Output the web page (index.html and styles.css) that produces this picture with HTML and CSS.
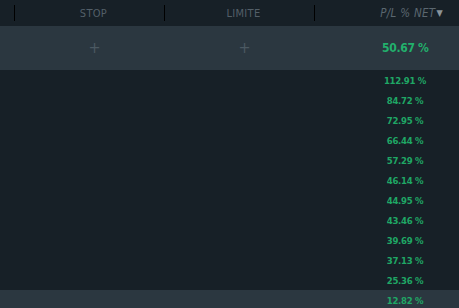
FILE: index.html
```html
<!DOCTYPE html>
<html>
<head>
<meta charset="utf-8">
<link rel="stylesheet" href="styles.css">
</head>
<body>
<div class="table">
  <div class="head">
    <div class="hcell c1"></div>
    <div class="hcell c2">STOP</div>
    <div class="hcell c3">LIMITE</div>
    <div class="hcell c4"><span class="pl">P/L % NET</span><span class="arrow">▼</span></div>
  </div>
  <div class="row active">
    <div class="cell c1"></div>
    <div class="cell c2"><span class="plus">+</span></div>
    <div class="cell c3"><span class="plus">+</span></div>
    <div class="cell c4 big">50.67 %</div>
  </div>
  <div class="list">
    <div class="row"><div class="cell c1"></div><div class="cell c2"></div><div class="cell c3"></div><div class="cell c4 num">112.91 %</div></div>
    <div class="row"><div class="cell c1"></div><div class="cell c2"></div><div class="cell c3"></div><div class="cell c4 num">84.72 %</div></div>
    <div class="row"><div class="cell c1"></div><div class="cell c2"></div><div class="cell c3"></div><div class="cell c4 num">72.95 %</div></div>
    <div class="row"><div class="cell c1"></div><div class="cell c2"></div><div class="cell c3"></div><div class="cell c4 num">66.44 %</div></div>
    <div class="row"><div class="cell c1"></div><div class="cell c2"></div><div class="cell c3"></div><div class="cell c4 num">57.29 %</div></div>
    <div class="row"><div class="cell c1"></div><div class="cell c2"></div><div class="cell c3"></div><div class="cell c4 num">46.14 %</div></div>
    <div class="row"><div class="cell c1"></div><div class="cell c2"></div><div class="cell c3"></div><div class="cell c4 num">44.95 %</div></div>
    <div class="row"><div class="cell c1"></div><div class="cell c2"></div><div class="cell c3"></div><div class="cell c4 num">43.46 %</div></div>
    <div class="row"><div class="cell c1"></div><div class="cell c2"></div><div class="cell c3"></div><div class="cell c4 num">39.69 %</div></div>
    <div class="row"><div class="cell c1"></div><div class="cell c2"></div><div class="cell c3"></div><div class="cell c4 num">37.13 %</div></div>
    <div class="row"><div class="cell c1"></div><div class="cell c2"></div><div class="cell c3"></div><div class="cell c4 num">25.36 %</div></div>
    <div class="row hl"><div class="cell c1"></div><div class="cell c2"></div><div class="cell c3"></div><div class="cell c4 num">12.82 %</div></div>
  </div>
</div>
</body>
</html>
```

FILE: styles.css
```css
html, body {
  margin: 0;
  padding: 0;
  background: #172027;
  overflow: hidden;
}
body {
  width: 459px;
  height: 308px;
  font-family: "DejaVu Sans Condensed", "DejaVu Sans", sans-serif;
}
.table {
  display: flex;
  flex-direction: column;
}
.head, .row {
  display: grid;
  grid-template-columns: 15px 150px 150px 1fr;
}
.head {
  height: 26px;
  background: #172027;
  align-items: center;
}
.hcell {
  height: 16px;
  display: flex;
  align-items: center;
  justify-content: center;
  color: #535f68;
  font-size: 11px;
  letter-spacing: 0.3px;
}
.head .c2, .head .c3 { padding-left: 8px; }
.head .c1, .head .c2, .head .c3 { border-right: 1px solid #000; }
.head .c4 {
  justify-content: flex-end;
  padding-right: 16px;
  font-style: italic;
  font-size: 11.5px;
  color: #5b6770;
}
.arrow {
  font-style: normal;
  font-size: 9px;
  margin-left: 1px;
  color: #8a949b;
}
.row {
  height: 20px;
  align-items: center;
}
.row.active {
  height: 44px;
  background: #2b3740;
}
.row.hl { background: #2b3740; }
.cell {
  display: flex;
  justify-content: center;
  align-items: center;
}
.row .c2, .row .c3 { padding-left: 9px; }
.plus {
  color: #4b5962;
  font-size: 16px;
  font-weight: 300;
  line-height: 1;
}
.big {
  color: #22b06c;
  font-weight: bold;
  font-size: 12px;
  letter-spacing: -0.3px;
  justify-content: flex-start;
  padding-left: 67px;
}
.num {
  color: #1fa765;
  font-weight: bold;
  font-size: 9.5px;
  letter-spacing: -0.3px;
  padding-left: 36px;
  justify-content: center;
}
```
